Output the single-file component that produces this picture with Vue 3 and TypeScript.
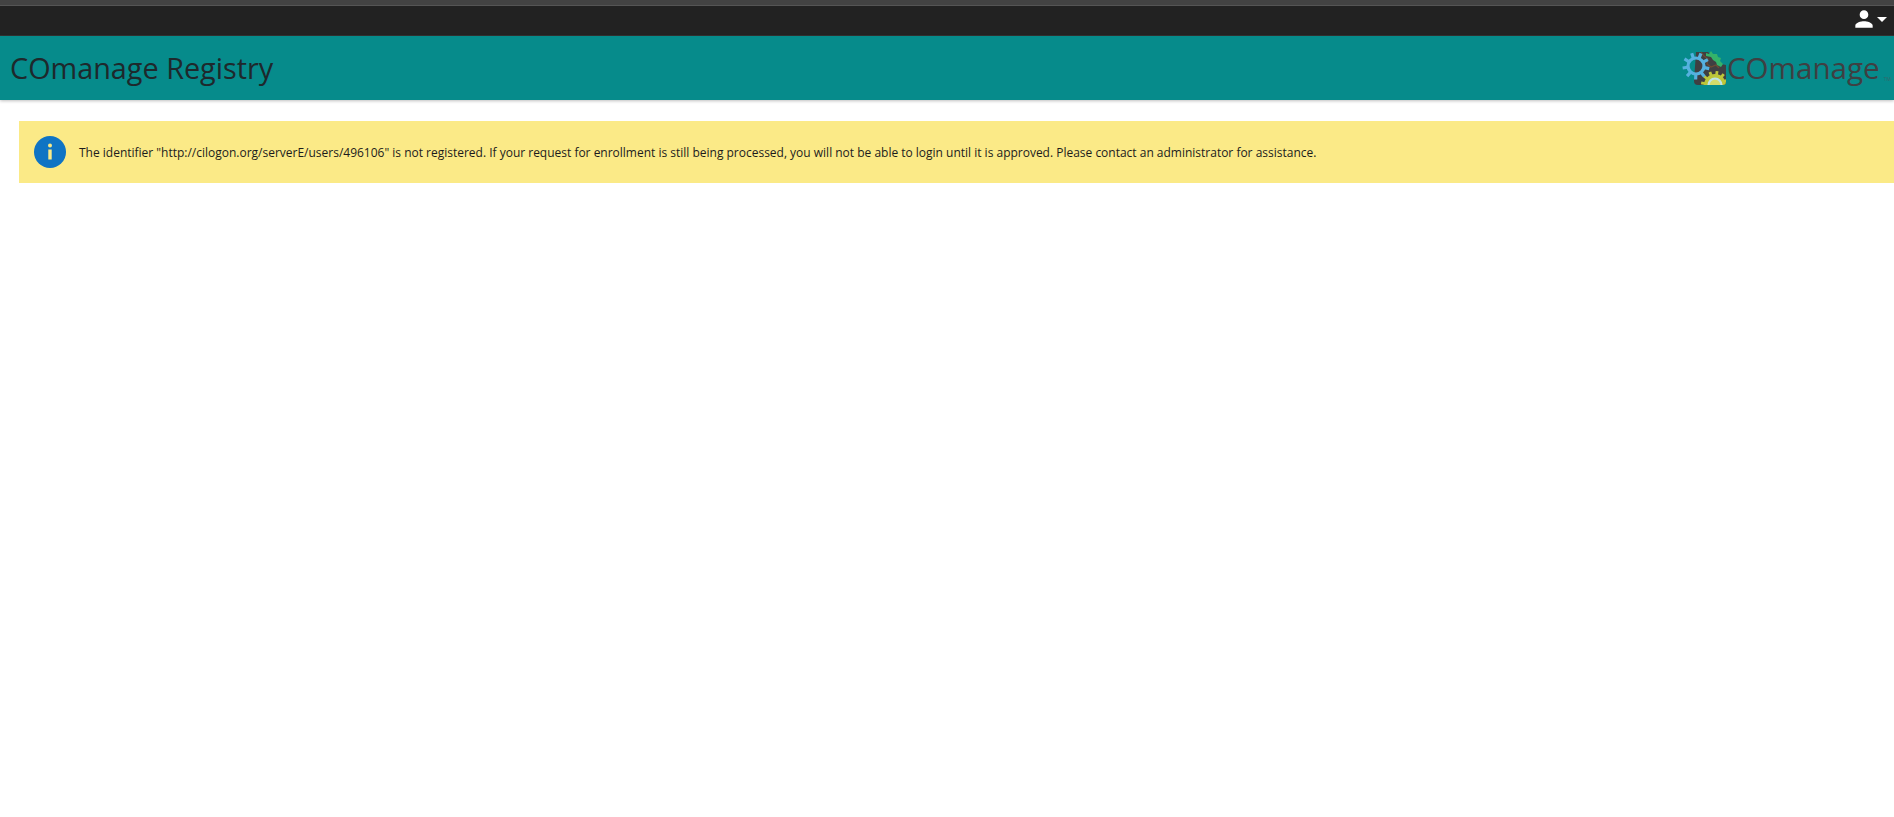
<script setup lang="ts">
const message =
  'The identifier "http://cilogon.org/serverE/users/496106" is not registered. If your request for enrollment is still being processed, you will not be able to login until it is approved. Please contact an administrator for assistance.'

const gearTeeth = (cx: number, cy: number, r: number, n: number, w: number, start = 0): string => {
  let d = ''
  for (let i = 0; i < n; i++) {
    const a = start + (i * 2 * Math.PI) / n
    const x = (cx + Math.cos(a) * r).toFixed(2)
    const y = (cy + Math.sin(a) * r).toFixed(2)
    const x0 = (cx + Math.cos(a) * (r - w)).toFixed(2)
    const y0 = (cy + Math.sin(a) * (r - w)).toFixed(2)
    d += `M${x0} ${y0}L${x} ${y}`
  }
  return d
}
const blueTeeth = gearTeeth(15, 17, 13.5, 9, 5, 0.2)
const yellowTeeth = gearTeeth(34, 36, 14, 12, 4, 0.15)
</script>

<template>
  <div class="page">
    <div class="top-strip"></div>
    <div class="user-bar">
      <button class="user-btn" type="button" aria-label="User menu">
        <svg class="user-icon" width="26" height="26" viewBox="0 0 24 24">
          <path fill="#fff" d="M12 12a4 4 0 1 0 0-8 4 4 0 0 0 0 8zm0 2c-2.7 0-8 1.3-8 4v2h16v-2c0-2.700-5.300-4-8-4z" />
        </svg>
        <span class="caret"></span>
      </button>
    </div>
    <header class="title-bar">
      <h1 class="title">COmanage Registry</h1>
      <div class="logo">
        <svg class="gears" width="46" height="38" viewBox="0 0 46 38">
          <defs>
            <clipPath id="logo-clip">
              <path d="M0 0h45v33q0 3-3 3H0z" />
            </clipPath>
          </defs>
          <path fill="#3f3f42" d="M15 3h12l13 12 5 1v17q0 3-3 3H17q-4 0-4-4z" />
          <path d="M20 3l3 4 4 3-1 5 4 3 5-2 3 3" stroke="#6e4b32" stroke-width="1.200" fill="none" />
          <g clip-path="url(#logo-clip)">
            <path d="M25 4l3 1 2-3 2 3 4 0 1 3 3 1-1 3 3 3-2 3-4-2-1-3-3-2-2-3-5-1z" fill="#34b36a" />
            <path :d="yellowTeeth" stroke="#bcc63a" stroke-width="2.800" fill="none" />
            <circle cx="34" cy="36" r="11" fill="#bcc63a" />
            <circle cx="34" cy="36" r="6.500" fill="#d3dc6a" stroke="#bde3e8" stroke-width="2.200" />
          </g>
          <path :d="blueTeeth" stroke="#55b1df" stroke-width="3.200" fill="none" />
          <circle cx="15" cy="17" r="8" fill="none" stroke="#55b1df" stroke-width="3.200" />
        </svg>
        <span class="logo-word">COmanage</span>
        <span class="tm">TM</span>
      </div>
    </header>
    <main class="content">
      <div class="notice" role="status">
        <svg class="info" width="32" height="32" viewBox="0 0 32 32">
          <circle cx="16" cy="16" r="16" fill="#0f74c4" />
          <circle cx="16" cy="9.500" r="2" fill="#fbea87" />
          <rect x="14.300" y="13.500" width="3.400" height="10" fill="#fbea87" />
        </svg>
        <p class="text">{{ message }}</p>
      </div>
    </main>
  </div>
</template>

<style>
html,
body {
  margin: 0;
  background: #fff;
}
</style>

<style scoped>
.page {
  height: 817px;
  overflow: hidden;
  font-family: "Open Sans", "Noto Sans", sans-serif;
  background: #fff;
}
.top-strip {
  height: 6px;
  background: #434343;
  border-bottom: 1px solid #555;
  box-sizing: border-box;
}
.user-bar {
  height: 30px;
  background: #222;
  display: flex;
  justify-content: flex-end;
  align-items: center;
  border-bottom: 1px solid #333;
  box-sizing: border-box;
}
.user-btn {
  display: flex;
  align-items: center;
  gap: 0;
  padding: 0 7px 3px 0;
  border: 0;
  background: none;
}
.caret {
  width: 0;
  height: 0;
  border-left: 5px solid transparent;
  border-right: 5px solid transparent;
  border-top: 5px solid #fff;
}
.title-bar {
  height: 64px;
  background: #068b8b;
  display: flex;
  justify-content: space-between;
  align-items: center;
  box-shadow: 0 1px 3px rgba(0, 0, 0, 0.25);
  position: relative;
}
.title {
  margin: 0 0 0 10px;
  font-size: 28.8px;
  font-weight: 400;
  color: #1e282c;
  line-height: 1.2;
}
.logo {
  display: flex;
  align-items: center;
}
.gears {
  margin-right: 0;
  margin-bottom: 1px;
}
.logo-word {
  font-size: 29.6px;
  color: #3f3f42;
  line-height: 1;
}
.tm {
  font-size: 5px;
  color: #35686a;
  align-self: flex-end;
  margin: 0 3px 6px 4px;
}
.content {
  padding: 21px 0 0 19px;
}
.notice {
  height: 62px;
  background: #fbea87;
  display: flex;
  align-items: center;
  padding-left: 15px;
}
.info {
  flex: none;
}
.text {
  margin: 0 0 0 13px;
  font-size: 11.99px;
  color: #1c1c1c;
  white-space: nowrap;
}
</style>
